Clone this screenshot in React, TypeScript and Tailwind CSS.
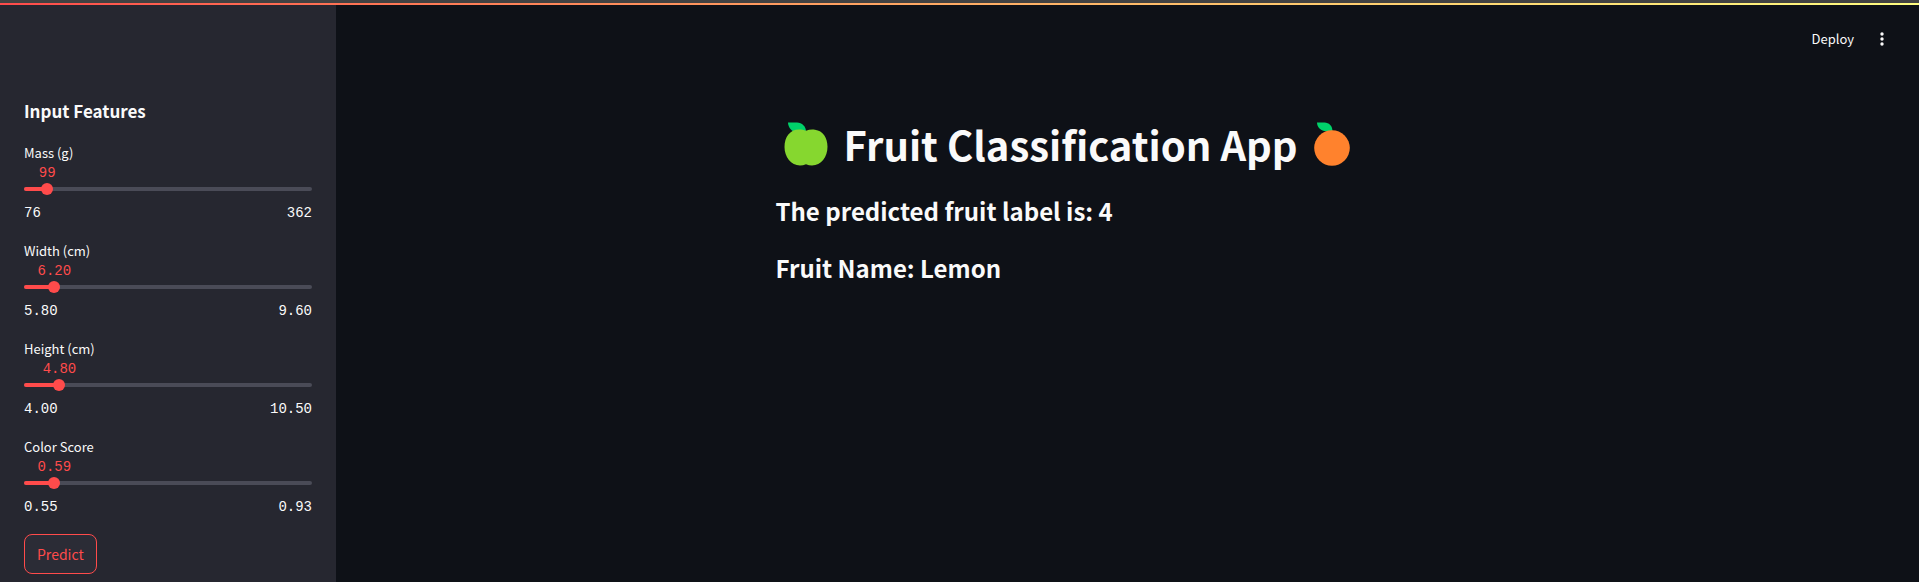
import { useState } from "react";

type Feature = {
  id: string;
  label: string;
  min: number;
  max: number;
  step: number;
  initial: number;
  digits: number;
};

const FEATURES: Feature[] = [
  { id: "mass", label: "Mass (g)", min: 76, max: 362, step: 1, initial: 99, digits: 0 },
  { id: "width", label: "Width (cm)", min: 5.8, max: 9.6, step: 0.01, initial: 6.2, digits: 2 },
  { id: "height", label: "Height (cm)", min: 4, max: 10.5, step: 0.01, initial: 4.8, digits: 2 },
  { id: "color", label: "Color Score", min: 0.55, max: 0.93, step: 0.01, initial: 0.59, digits: 2 },
];

function FeatureSlider({ id, label, min, max, step, initial, digits }: Feature) {
  const [value, setValue] = useState(initial);
  const percent = `${((value - min) / (max - min)) * 100}%`;
  return (
    <div>
      <label htmlFor={id} className="block text-[13px] leading-5">
        {label}
      </label>
      <div className="relative h-10 font-['Liberation_Mono',monospace]">
        <output
          htmlFor={id}
          className="absolute top-0 -translate-x-1/2 text-sm leading-5 text-[#ff4b4b]"
          style={{ left: percent }}
        >
          {value.toFixed(digits)}
        </output>
        <div className="absolute inset-x-0 top-6 h-1 overflow-hidden rounded-full bg-[#4a4b57]">
          <div className="h-full bg-[#ff4b4b]" style={{ width: percent }} />
        </div>
        <input
          id={id}
          type="range"
          min={min}
          max={max}
          step={step}
          value={value}
          onChange={(e) => setValue(Number(e.target.value))}
          className="absolute -inset-x-1.5 top-5 h-3 cursor-pointer appearance-none bg-transparent [&::-webkit-slider-thumb]:size-3 [&::-webkit-slider-thumb]:appearance-none [&::-webkit-slider-thumb]:rounded-full [&::-webkit-slider-thumb]:bg-[#ff4b4b]"
        />
      </div>
      <div className="flex justify-between font-['Liberation_Mono',monospace] text-sm leading-5">
        <span>{min.toFixed(digits)}</span>
        <span>{max.toFixed(digits)}</span>
      </div>
    </div>
  );
}

function GreenApple() {
  return (
    <svg viewBox="0 0 44 44" className="size-11" aria-hidden="true">
      <path fill="#00d26a" d="M4 .5H13c5 0 9 4 9 9v1H13C8 10 4 5.500 4 .5Z" />
      <path
        fill="#86d72f"
        d="M22 8.800C25 7.600 28 7.300 31 7.800c8 1 12.500 8 12.500 17C43.500 35 37 43.500 28 43.500c-2 0-4-.4-6-1.200-2 .8-4 1.200-6 1.200C7 43.500.5 35 .5 25 .5 15 6 7.500 15 7.500c2.500 0 4.800.4 7 1.300Z"
      />
    </svg>
  );
}

function Tangerine() {
  return (
    <svg viewBox="0 0 36 44" className="h-11 w-9" aria-hidden="true">
      <path fill="#00d26a" d="M3 .5h7.500c4.500 0 8 3.500 8 8.500H13C8 9.500 3 6 3 .5Z" />
      <circle cx="18" cy="26" r="17.800" fill="#ff822d" />
    </svg>
  );
}

export default function App() {
  return (
    <div className="flex min-h-screen flex-col bg-[#0e1117] font-['Noto_Sans_CJK_SC',sans-serif] text-[#fafafa]">
      <div className="h-[3px] bg-[#424242]" />
      <div className="h-0.5 bg-linear-to-r from-[#ff4b4b] to-[#fffd80]" />
      <div className="flex grow">
        <aside className="w-[336px] shrink-0 bg-[#262730] px-6 pt-[91px] pb-2">
          <h2 className="text-[17px] leading-[30px] font-bold">Input Features</h2>
          <form onSubmit={(e) => e.preventDefault()}>
            <div className="flex flex-col gap-[18px] pt-[17px]">
              {FEATURES.map((feature) => (
                <FeatureSlider key={feature.id} {...feature} />
              ))}
            </div>
            <button
              type="submit"
              className="mt-[17px] h-10 rounded-lg border border-[#ff4b4b] bg-[#2b2c36] px-3 text-sm text-[#ff4b4b]"
            >
              Predict
            </button>
          </form>
        </aside>
        <div className="grow">
          <header className="flex h-[68px] items-center justify-end gap-4 pr-[25px]">
            <button type="button" className="text-[13px] leading-5">
              Deploy
            </button>
            <button type="button" aria-label="Main menu" className="flex w-6 justify-center">
              <svg viewBox="0 0 4 14" className="h-3.5 w-1 fill-current" aria-hidden="true">
                <circle cx="2" cy="2" r="1.700" />
                <circle cx="2" cy="7" r="1.700" />
                <circle cx="2" cy="12" r="1.700" />
              </svg>
            </button>
          </header>
          <main className="mx-auto max-w-[704px] pt-[41px]">
            <h1 className="flex items-center pl-2 text-[40px] leading-[60px] font-bold whitespace-nowrap">
              <GreenApple />
              <span className="pr-4 pl-4">Fruit Classification App</span>
              <Tangerine />
            </h1>
            <h2 className="pt-[17px] text-2xl leading-10 font-bold">The predicted fruit label is: 4</h2>
            <h2 className="pt-[17px] text-2xl leading-10 font-bold">Fruit Name: Lemon</h2>
          </main>
        </div>
      </div>
    </div>
  );
}
